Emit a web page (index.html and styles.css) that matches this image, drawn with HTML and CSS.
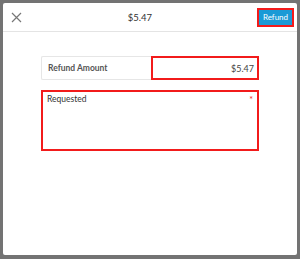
FILE: index.html
```html
<!DOCTYPE html>
<html>
<head>
    <title>Refund</title>
    <link rel="stylesheet" href="styles.css">
</head>
<body>
    <div class="modal">
        <div class="modal-header">
            <button class="close-btn" aria-label="Close">
                <svg width="11" height="11" viewBox="0 0 11 11">
                    <path d="M1 1 L10 10 M10 1 L1 10" stroke="#777" stroke-width="1.2" fill="none"/>
                </svg>
            </button>
            <div class="modal-title">$5.47</div>
            <button class="refund-btn">Refund</button>
        </div>

        <div class="modal-body">
            <div class="amount-row">
                <div class="amount-label">Refund Amount</div>
                <div class="amount-value">$5.47</div>
            </div>
            <div class="reason-box">
                <span class="reason-label">Requested</span>
                <span class="required">*</span>
            </div>
        </div>
    </div>
</body>
</html>
```

FILE: styles.css
```css
html,
body {
    margin: 0;
    padding: 0;
    height: 100%;
}

body {
    font-family: Lato, "Open Sans", Arial, sans-serif;
    background-color: #737373;
    padding: 3px;
    box-sizing: border-box;
}

.modal {
    background: #fff;
    height: 252px;
    border-radius: 2px;
    box-sizing: border-box;
}

.modal-header {
    height: 28px;
    border-bottom: 1px solid #e4e4e4;
    display: flex;
    align-items: center;
    justify-content: space-between;
    padding: 0 3px 0 6px;
}

.close-btn {
    background: none;
    border: none;
    padding: 0;
    width: 14px;
    height: 14px;
    display: flex;
    align-items: center;
    justify-content: center;
}

.modal-title {
    font-size: 9.5px;
    color: #333;
}

.refund-btn {
    background: #1a9ad6;
    color: #fff;
    border: 2px solid #f21b1b;
    font-family: inherit;
    font-size: 8px;
    height: 19px;
    width: 37px;
    padding: 0;
}

.modal-body {
    padding: 24px 38px 0 38px;
}

.amount-row {
    display: flex;
    height: 24px;
}

.amount-label {
    width: 110px;
    box-sizing: border-box;
    border: 1px solid #e6e6e6;
    border-right: none;
    border-radius: 2px 0 0 2px;
    font-size: 8.5px;
    font-weight: bold;
    color: #555;
    display: flex;
    align-items: center;
    padding-left: 6px;
}

.amount-value {
    flex: 1;
    border: 2px solid #f21b1b;
    font-size: 9px;
    color: #444;
    display: flex;
    align-items: center;
    justify-content: flex-end;
    padding-right: 3px;
}

.reason-box {
    margin-top: 10px;
    height: 61px;
    box-sizing: border-box;
    border: 2px solid #f21b1b;
    display: flex;
    justify-content: space-between;
    padding: 2px 4px 0 4px;
    font-size: 8.5px;
    color: #333;
}

.required {
    color: #f21b1b;
    font-size: 9px;
}
```
